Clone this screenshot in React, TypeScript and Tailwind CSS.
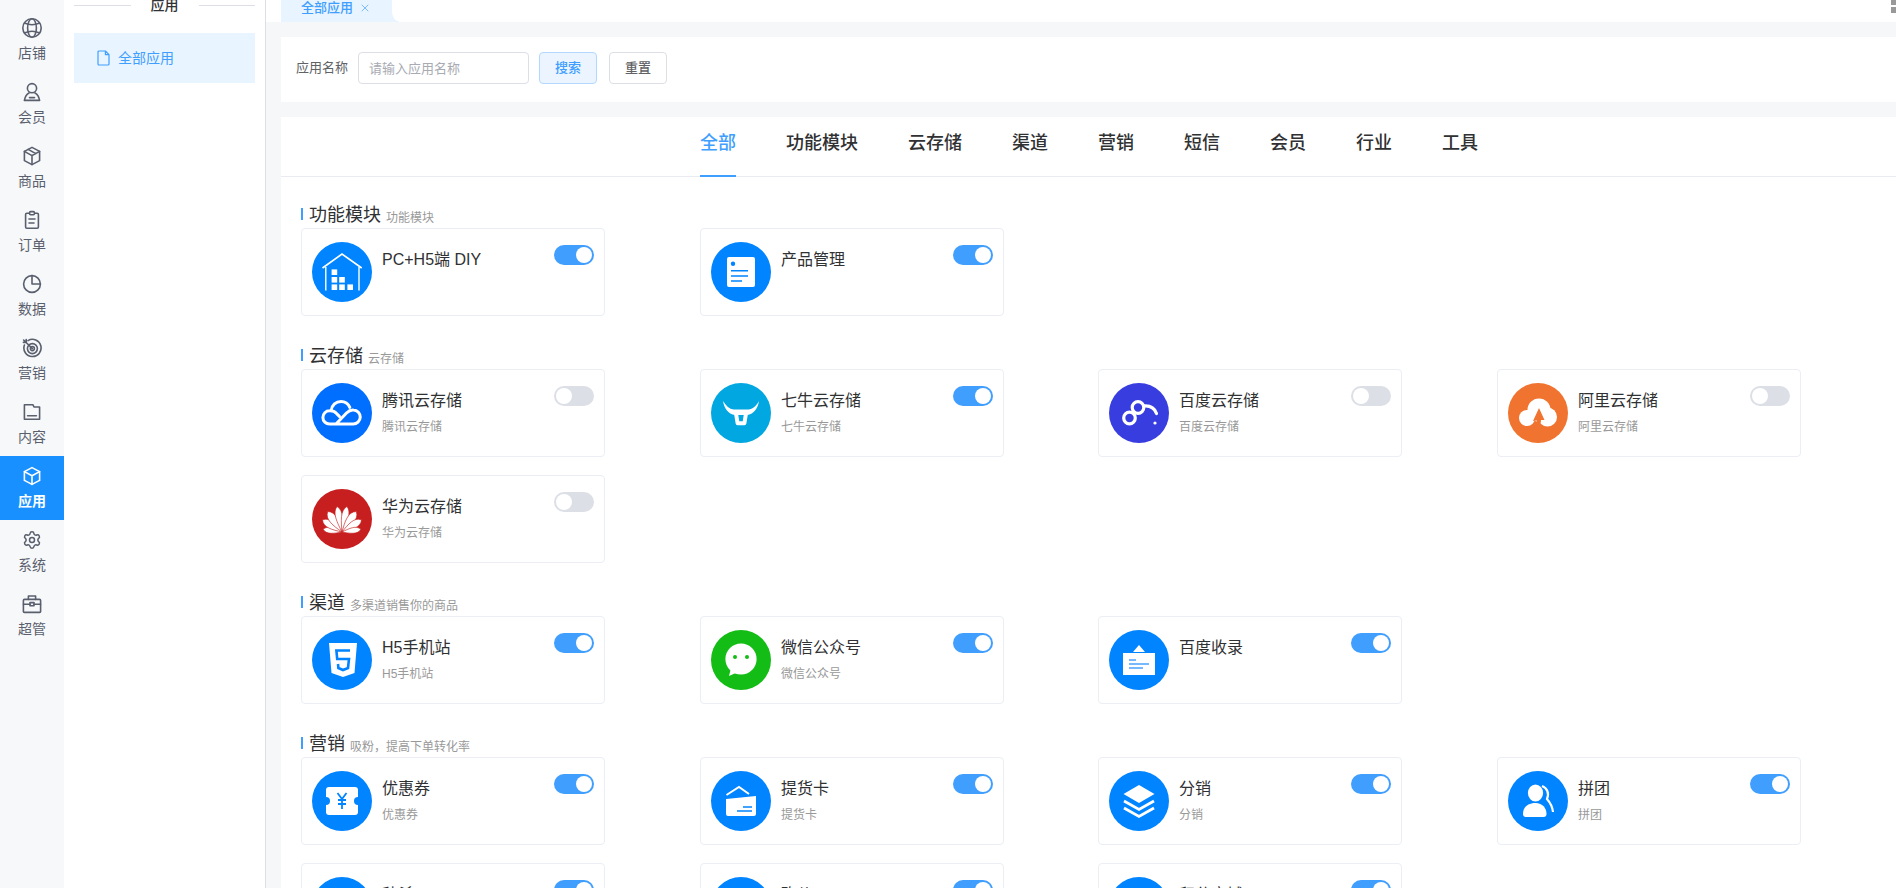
import type { ReactNode } from 'react'
import { Settings, X } from 'lucide-react'

type App = { name: string; desc?: string; on: boolean; bg: string; logo?: ReactNode }
type Section = { title: string; sub: string; apps: App[] }

const BLUE = 'bg-[#0084ff]'

function NavIcon({ children }: { children: ReactNode }) {
  return (
    <svg viewBox="0 0 20 20" width="20" height="20" fill="none" stroke="currentColor" strokeWidth="1.6" strokeLinejoin="round" strokeLinecap="round">
      {children}
    </svg>
  )
}

const navItems: { label: string; icon: ReactNode; active?: boolean }[] = [
  {
    label: '店铺',
    icon: (
      <NavIcon>
        <circle cx="10" cy="10" r="9.2" />
        <ellipse cx="10" cy="10" rx="4.4" ry="9.2" />
        <path d="M2.4 5 Q10 8.4 17.6 5 M2.4 15 Q10 11.6 17.6 15" />
      </NavIcon>
    ),
  },
  {
    label: '会员',
    icon: (
      <NavIcon>
        <circle cx="10" cy="6.2" r="4.6" />
        <path d="M7 11 C4.6 12.2 3 15 2.4 18.4 H17.6 C17 15 15.4 12.2 13 11" />
        <path d="M7.5 15.6 H12.5" />
      </NavIcon>
    ),
  },
  {
    label: '商品',
    icon: (
      <NavIcon>
        <path d="M10 1.4 L17.6 5.4 V14.6 L10 18.6 L2.4 14.6 V5.4 Z" />
        <path d="M2.4 5.4 L10 9.6 L17.6 5.4 M10 9.6 V18.6 M6.2 3.4 L13.8 7.6" />
      </NavIcon>
    ),
  },
  {
    label: '订单',
    icon: (
      <NavIcon>
        <rect x="3.6" y="3.2" width="12.8" height="15" rx="1.2" />
        <rect x="7.6" y="1.6" width="4.8" height="3.2" rx="1" fill="#f7f8fa" />
        <path d="M7 9 H13 M7 13 H12" />
      </NavIcon>
    ),
  },
  {
    label: '数据',
    icon: (
      <NavIcon>
        <circle cx="10" cy="10" r="8.4" />
        <path d="M10 1.6 V10 H18.4" />
      </NavIcon>
    ),
  },
  {
    label: '营销',
    icon: (
      <NavIcon>
        <path d="M6 2.6 A8.6 8.6 0 1 1 2.4 7" />
        <circle cx="10.4" cy="10.6" r="5" />
        <circle cx="10.4" cy="10.6" r="2" />
        <path d="M10.4 10.6 L1.6 2 M1.4 4.4 L4.2 4.4 L4.2 1.6" />
      </NavIcon>
    ),
  },
  {
    label: '内容',
    icon: (
      <NavIcon>
        <path d="M2.4 2.8 H11 L12 5 H17.6 V17.2 H2.4 Z" />
        <path d="M5.6 13.8 H14.4" />
      </NavIcon>
    ),
  },
  {
    label: '应用',
    active: true,
    icon: (
      <NavIcon>
        <path d="M10 1.6 L17.6 5.6 V14.4 L10 18.4 L2.4 14.4 V5.6 Z" />
        <path d="M2.4 5.6 L10 9.8 L17.6 5.6 M10 9.8 V18.4" />
      </NavIcon>
    ),
  },
  { label: '系统', icon: <Settings size={20} strokeWidth={1.8} /> },
  {
    label: '超管',
    icon: (
      <NavIcon>
        <rect x="1.4" y="5.4" width="17.2" height="13" rx="1" />
        <path d="M6.4 5.4 V2 H13.6 V5.4" />
        <path d="M1.4 10.2 H8 M12 10.2 H18.6" />
        <rect x="8" y="8.6" width="4" height="3.2" />
      </NavIcon>
    ),
  },
]

const tabs = ['全部', '功能模块', '云存储', '渠道', '营销', '短信', '会员', '行业', '工具']

function Logo({ children }: { children: ReactNode }) {
  return (
    <svg viewBox="0 0 60 60" width="60" height="60" fill="none">
      {children}
    </svg>
  )
}

const houseLogo = (
  <Logo>
    <path d="M10.5 26 L30 12 L49.7 26" stroke="#fff" strokeWidth="1.6" />
    <path d="M13.8 25 V48.5 M47 25 V48.5" stroke="#fff" strokeWidth="1.4" />
    <g fill="#fff">
      <rect x="19.6" y="27.4" width="5.6" height="5.6" />
      <rect x="19.6" y="35" width="5.6" height="5.6" />
      <rect x="27.2" y="35" width="5.6" height="5.6" />
      <rect x="19.6" y="42.4" width="5.6" height="5.6" />
      <rect x="27.2" y="42.4" width="5.6" height="5.6" />
      <rect x="35.4" y="42.4" width="5.6" height="5.6" />
    </g>
  </Logo>
)

const docLogo = (
  <Logo>
    <rect x="16" y="15" width="28" height="30" rx="2" fill="#fff" />
    <circle cx="22" cy="21.8" r="2.2" fill="#0084ff" />
    <path d="M20 28.8 H37 M20 34 H37 M20 39 H31" stroke="#0084ff" strokeWidth="1.5" />
  </Logo>
)

const tencentLogo = (
  <Logo>
    <g stroke="#fff" strokeWidth="3" strokeLinecap="round" strokeLinejoin="round">
      <path d="M24 41 H41 A7 7 0 0 0 41.5 27 C38.5 26.7 36.5 28 34.5 30 L24 41 H17.5 A6.6 6.6 0 0 1 17.5 27.8 C20 27.6 22.8 28.6 24.6 30.6 L27.4 33.4" />
      <path d="M19.2 27.6 C19.8 22 24 18.4 29 18.4 C33 18.4 36.2 20.6 37.8 24.4" />
    </g>
  </Logo>
)

const qiniuLogo = (
  <Logo>
    <path d="M12 18 C13 25 17 31 24 32 H36 C43 31 47 25 48 18 C45.5 23 41.5 26 37.5 26.5 H22.5 C18.5 26 15 23 12 18 Z" fill="#fff" />
    <path d="M24.6 28 L26.6 40.2 H33.4 L35.4 28" stroke="#fff" strokeWidth="4" strokeLinejoin="round" />
  </Logo>
)

const baiduLogo = (
  <Logo>
    <g stroke="#fff" strokeWidth="3.2" strokeLinecap="round">
      <circle cx="20.5" cy="35" r="5.8" />
      <circle cx="29" cy="24.5" r="5.8" />
      <path d="M35 23 C40.5 22.5 45.5 25 47.5 30.5" />
    </g>
    <circle cx="46" cy="40" r="1.6" fill="#fff" />
  </Logo>
)

const aliLogo = (
  <Logo>
    <g fill="#fff">
      <circle cx="31" cy="27" r="11.5" />
      <circle cx="19" cy="35" r="8" />
      <circle cx="39.5" cy="34" r="9.5" />
    </g>
    <path d="M31 25 L36.5 37 H33 C33 40 32 42.5 30 44.5 H27 C28.4 42 29 40 28.8 37.5 L25 38 Z" fill="#f0742f" />
  </Logo>
)

// two mirrored fans of teardrop petals
const huaweiPetals: [number, number, number][] = [
  [-82, 19, 5], [-58, 23, 6.4], [-35, 25, 7], [-11, 26, 6],
  [11, 26, 6], [35, 25, 7], [58, 23, 6.4], [82, 19, 5],
]

const huaweiLogo = (
  <Logo>
    <g fill="#fff" stroke="#c71f1f" strokeWidth="0.6">
      {huaweiPetals.map(([deg, len, w]) => (
        <path
          key={deg}
          d={`M30 43 C${30 - w * 0.5} ${43 - len * 0.4} ${30 - w} ${43 - len * 0.8} 30 ${43 - len} C${30 + w} ${43 - len * 0.8} ${30 + w * 0.5} ${43 - len * 0.4} 30 43 Z`}
          transform={`rotate(${deg} 30 43)`}
        />
      ))}
    </g>
  </Logo>
)

const h5Logo = (
  <Logo>
    <path d="M17 13 H45 L42.5 43 L31 47 L19.5 43 Z" fill="#fff" />
    <path d="M38 20.5 H24.4 L25.2 29 H37 L36 38 L31 40 L26.4 38 L26 34" stroke="#0084ff" strokeWidth="2.6" />
  </Logo>
)

const wechatLogo = (
  <Logo>
    <circle cx="30" cy="29" r="15.6" fill="#fff" />
    <path d="M20 38 L18 46 L27 42 Z" fill="#fff" />
    <circle cx="24" cy="27" r="2" fill="#13bd15" />
    <circle cx="36" cy="27" r="2" fill="#13bd15" />
  </Logo>
)

const baiduIndexLogo = (
  <Logo>
    <path d="M30 15 L36 22 H24 Z" fill="#fff" />
    <rect x="14" y="23" width="32" height="22" fill="#fff" />
    <path d="M20 30 H27 M20 34 H40 M20 38 H34" stroke="#4aa3ff" strokeWidth="1.6" />
  </Logo>
)

const couponLogo = (
  <Logo>
    <path
      d="M17 16 H43 A3 3 0 0 1 46 19 V26 A4 4 0 0 0 46 34 V41 A3 3 0 0 1 43 44 H17 A3 3 0 0 1 14 41 V34 A4 4 0 0 0 14 26 V19 A3 3 0 0 1 17 16 Z"
      fill="#fff"
    />
    <path d="M25.5 22 L30 28 L34.5 22 M30 28 V38 M26 29 H34 M26 33 H34" stroke="#0084ff" strokeWidth="1.8" />
  </Logo>
)

const pickupLogo = (
  <Logo>
    <path d="M15.5 24 L28 16 L38 23" stroke="#fff" strokeWidth="2" />
    <path d="M15 28 L45 25 V43 A2 2 0 0 1 43 45 H17 A2 2 0 0 1 15 43 Z" fill="#fff" />
    <path d="M32 36 H41 M26 40 H41" stroke="#0084ff" strokeWidth="1.6" />
  </Logo>
)

const layersLogo = (
  <Logo>
    <path d="M30 14 L45.5 23 L30 32 L14.5 23 Z" fill="#fff" />
    <path d="M15 30 L30 38.5 L45 30 M15 37 L30 45.5 L45 37" stroke="#fff" strokeWidth="2.8" />
  </Logo>
)

const groupLogo = (
  <Logo>
    <ellipse cx="27.5" cy="22" rx="7.6" ry="8.6" fill="#fff" />
    <path d="M15 43 C15 36 20 32 27.5 32 C34.5 32 38.5 37 38.5 43 A3 3 0 0 1 35.5 46 H18 A3 3 0 0 1 15 43 Z" fill="#fff" />
    <path d="M34 15 C39 17 41.5 22 39 28 C42.5 32 44.5 36 45 41" stroke="#fff" strokeWidth="2.2" />
  </Logo>
)

const sections: Section[] = [
  {
    title: '功能模块',
    sub: '功能模块',
    apps: [
      { name: 'PC+H5端 DIY', on: true, bg: BLUE, logo: houseLogo },
      { name: '产品管理', on: true, bg: BLUE, logo: docLogo },
    ],
  },
  {
    title: '云存储',
    sub: '云存储',
    apps: [
      { name: '腾讯云存储', desc: '腾讯云存储', on: false, bg: 'bg-[#006eff]', logo: tencentLogo },
      { name: '七牛云存储', desc: '七牛云存储', on: true, bg: 'bg-[#00a7e0]', logo: qiniuLogo },
      { name: '百度云存储', desc: '百度云存储', on: false, bg: 'bg-[#383de0]', logo: baiduLogo },
      { name: '阿里云存储', desc: '阿里云存储', on: false, bg: 'bg-[#f0742f]', logo: aliLogo },
      { name: '华为云存储', desc: '华为云存储', on: false, bg: 'bg-[#c71f1f]', logo: huaweiLogo },
    ],
  },
  {
    title: '渠道',
    sub: '多渠道销售你的商品',
    apps: [
      { name: 'H5手机站', desc: 'H5手机站', on: true, bg: BLUE, logo: h5Logo },
      { name: '微信公众号', desc: '微信公众号', on: true, bg: 'bg-[#13bd15]', logo: wechatLogo },
      { name: '百度收录', on: true, bg: BLUE, logo: baiduIndexLogo },
    ],
  },
  {
    title: '营销',
    sub: '吸粉，提高下单转化率',
    apps: [
      { name: '优惠券', desc: '优惠券', on: true, bg: BLUE, logo: couponLogo },
      { name: '提货卡', desc: '提货卡', on: true, bg: BLUE, logo: pickupLogo },
      { name: '分销', desc: '分销', on: true, bg: BLUE, logo: layersLogo },
      { name: '拼团', desc: '拼团', on: true, bg: BLUE, logo: groupLogo },
      { name: '秒杀', desc: '秒杀', on: true, bg: BLUE },
      { name: '砍价', desc: '砍价', on: true, bg: BLUE },
      { name: '积分商城', desc: '积分商城', on: true, bg: BLUE },
    ],
  },
]

function Toggle({ on }: { on: boolean }) {
  return (
    <div className={`mt-[3px] flex h-5 w-10 shrink-0 items-center rounded-full px-0.5 ${on ? 'justify-end bg-[#409eff]' : 'justify-start bg-[#dcdfe6]'}`}>
      <div className="h-4 w-4 rounded-full bg-white" />
    </div>
  )
}

function AppCard({ app }: { app: App }) {
  return (
    <div className="flex h-[88px] w-[304px] rounded border border-[#ebeef5] bg-white pt-[13px] pr-2.5 pl-[10px]">
      <div className={`h-[60px] w-[60px] shrink-0 overflow-hidden rounded-full ${app.bg}`}>{app.logo}</div>
      <div className="ml-2.5 min-w-0 flex-1 pt-2">
        <div className="text-base leading-5 text-[#303133]">{app.name}</div>
        {app.desc && <div className="mt-2 text-xs leading-4 text-[#999]">{app.desc}</div>}
      </div>
      <Toggle on={app.on} />
    </div>
  )
}

export default function App() {
  return (
    <div className="flex h-[888px] w-[1896px] overflow-hidden bg-white font-['Liberation_Sans','Noto_Sans_CJK_SC',sans-serif]">
      {/* Icon rail */}
      <aside className="w-16 shrink-0 bg-[#f7f8fa] pt-2">
        {navItems.map((item) => (
          <div
            key={item.label}
            className={`flex h-16 flex-col items-center pt-2.5 ${item.active ? 'bg-[#1890ff] text-white' : 'text-[#5a5f6e]'}`}
          >
            <div className="flex h-5 w-5 items-center justify-center">{item.icon}</div>
            <div className={`mt-[5px] text-sm leading-5 ${item.active ? 'font-bold' : ''}`}>{item.label}</div>
          </div>
        ))}
      </aside>

      {/* Second menu */}
      <aside className="w-[202px] shrink-0 border-r border-[#dcdfe6] bg-white pr-[10px] pl-[10px]">
        <div className="-mt-[5px] flex h-5 items-center gap-5">
          <div className="h-px flex-1 bg-[#dcdfe6]" />
          <span className="text-sm leading-5 font-medium text-[#303133]">应用</span>
          <div className="h-px flex-1 bg-[#dcdfe6]" />
        </div>
        <div className="mt-[18px] flex h-[50px] items-center bg-[#e8f4ff] pl-[23px] text-sm text-[#409eff]">
          <svg viewBox="0 0 13 16" width="13" height="16" fill="none" stroke="currentColor" strokeWidth="1.2" strokeLinejoin="round">
            <path d="M1 2 A1 1 0 0 1 2 1 H8.4 L12 4.6 V14 A1 1 0 0 1 11 15 H2 A1 1 0 0 1 1 14 Z M8.4 1 V4.6 H12" />
          </svg>
          <span className="ml-2">全部应用</span>
        </div>
      </aside>

      {/* Main */}
      <main className="flex min-w-0 flex-1 flex-col bg-[#f6f7f9]">
        <div className="flex h-[22px] shrink-0 justify-between bg-white pl-[15px]">
          <div className="flex">
            <div className="flex h-[22px] w-[111px] items-start bg-[#e8f4ff] pl-5 text-[13px] leading-4 font-medium text-[#409eff]">
              全部应用
              <X size={12} strokeWidth={1.3} className="mt-[2px] ml-[6px]" />
            </div>
            <svg viewBox="0 0 8 22" width="8" height="22">
              <path d="M0 0 V22 H8 C3 21 0 17 0 11 Z" fill="#e8f4ff" />
            </svg>
          </div>
          <div className="flex w-[5px] flex-col gap-[2px]">
            <div className="h-[5px] bg-[#999]" />
            <div className="h-[6px] bg-[#999]" />
          </div>
        </div>

        <div className="mt-[15px] ml-[15px] flex h-[65px] shrink-0 items-center bg-white pb-[3px] pl-[15px] text-[13px]">
          <span className="text-[#606266]">应用名称</span>
          <input
            readOnly
            placeholder="请输入应用名称"
            className="ml-[10px] h-8 w-[171px] rounded border border-[#dcdfe6] bg-white px-[10px] text-[13px] outline-none placeholder:text-[#a8abb2]"
          />
          <button className="ml-[10px] h-8 w-[58px] rounded border border-[#b3d8ff] bg-[#ecf5ff] text-[13px] font-medium text-[#409eff]">搜索</button>
          <button className="ml-3 h-8 w-[58px] rounded border border-[#dcdfe6] bg-white text-[13px] font-medium text-[#606266]">重置</button>
        </div>

        <div className="mt-[15px] ml-[15px] min-h-0 flex-1 bg-white">
          <div className="flex h-[60px] justify-center gap-[50px] border-b border-[#e9ebf0] pl-px">
            {tabs.map((tab, i) => (
              <div
                key={tab}
                className={`h-[60px] text-lg leading-[52px] font-medium ${i === 0 ? 'border-b-2 border-[#409eff] text-[#409eff]' : 'text-[#303133]'}`}
              >
                {tab}
              </div>
            ))}
          </div>

          <div className="pt-4 pl-5">
            {sections.map((section) => (
              <section key={section.title}>
                <div className="flex h-[35px] items-start pt-3">
                  <div className="mt-[3px] mr-[6px] h-3 w-0.5 bg-[#409eff]" />
                  <span className="text-lg leading-5 text-[#303133]">{section.title}</span>
                  <span className="mt-[3px] ml-[5px] text-xs leading-5 text-[#999]">{section.sub}</span>
                </div>
                <div className="grid grid-cols-[399px_398px_399px_399px]">
                  {section.apps.map((app) => (
                    <div key={app.name} className="mb-[18px]">
                      <AppCard app={app} />
                    </div>
                  ))}
                </div>
              </section>
            ))}
          </div>
        </div>
      </main>
    </div>
  )
}
